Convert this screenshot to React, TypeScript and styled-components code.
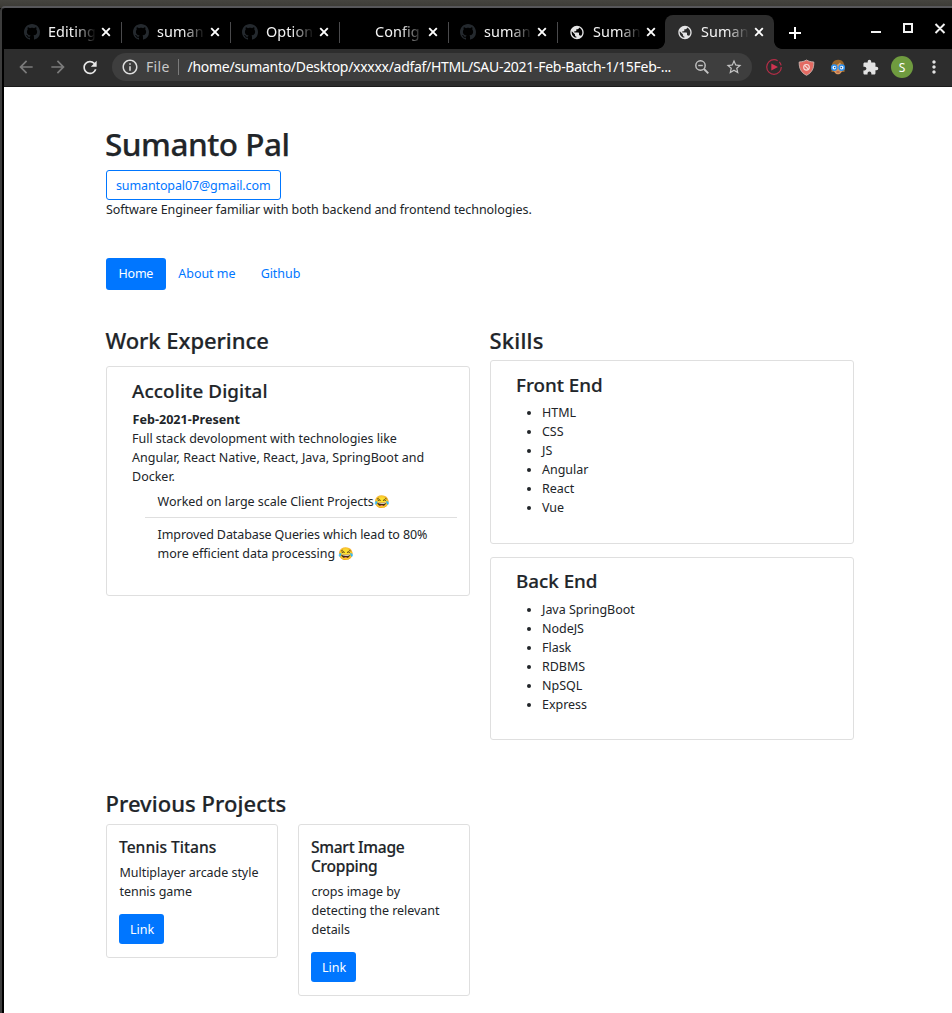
import React from "react";
import styled, { createGlobalStyle } from "styled-components";
import {
  MdArrowBack,
  MdArrowForward,
  MdExtension,
  MdInfoOutline,
  MdMoreVert,
  MdPublic,
  MdRefresh,
  MdStarBorder,
} from "react-icons/md";

const GlobalStyle = createGlobalStyle`
  *, *::before, *::after { box-sizing: border-box; }
  body {
    margin: 0;
    background: #000;
    color: #212529;
    font-family: "Noto Sans", sans-serif;
    font-size: 12.5px;
    line-height: 19px;
  }
  h1, h2, h3, h4, p, ul { margin: 0; padding: 0; font-weight: 400; }
`;

/* ---------- window frame ---------- */

const Desktop = styled.div`
  width: 952px;
  height: 1013px;
  padding-top: 6px;
  overflow: hidden;
  background: linear-gradient(#45443f, #3b3a35) 0 0 / 100% 8px no-repeat, #000;
`;

const Window = styled.div`
  display: flex;
  flex-direction: column;
  height: 1007px;
  padding-left: 2px;
  border-top: 2px solid #57575a;
  border-left: 2px solid #3c3c3c;
  border-top-left-radius: 5px;
  background: #000;
`;

/* ---------- tab strip ---------- */

const TabStrip = styled.div`
  display: flex;
  align-items: flex-end;
  flex: none;
  height: 41px;
  padding-left: 9px;
  color: #fff;
`;

const Tab = styled.div<{ $active?: boolean; $divider?: boolean; $width?: number }>`
  position: relative;
  display: flex;
  align-items: center;
  width: ${(p) => p.$width ?? 109}px;
  height: 34px;
  padding-left: ${(p) => (p.$active ? 12 : 11)}px;
  border-radius: 8px 8px 0 0;
  background: ${(p) => (p.$active ? "#2d2d2d" : "transparent")};

  &::after {
    content: "";
    display: ${(p) => (p.$divider ? "block" : "none")};
    position: absolute;
    right: 0;
    top: 7px;
    width: 1px;
    height: 21px;
    background: #4a4a4c;
  }
`;

const TabFlare = styled.i<{ $side: "left" | "right" }>`
  position: absolute;
  bottom: 0;
  ${(p) => p.$side}: -8px;
  width: 8px;
  height: 8px;
  background: radial-gradient(
    circle at ${(p) => (p.$side === "left" ? "0 0" : "100% 0")},
    transparent 7.5px,
    #2d2d2d 8.2px
  );
`;

const Favicon = styled.span`
  display: flex;
  align-items: center;
  justify-content: center;
  flex: none;
  width: 16px;
  height: 16px;
  margin-right: 8px;
  color: #e4e4e5;
`;

const TabTitle = styled.span`
  flex: none;
  width: 48px;
  margin-right: 5px;
  overflow: hidden;
  white-space: nowrap;
  font-size: 14.4px;
  line-height: 20px;
  letter-spacing: 0.1px;
  color: #f4f4f4;
  mask-image: linear-gradient(90deg, #000 26px, transparent 48px);
`;

const TabClose = styled.span`
  display: flex;
  color: #fff;
`;

const NewTab = styled.span`
  display: flex;
  margin: 0 0 10px 15px;
`;

const WindowButtons = styled.div`
  display: flex;
  align-items: center;
  align-self: flex-start;
  height: 40px;
  margin-left: auto;
  padding-right: 5px;
`;

/* ---------- toolbar ---------- */

const Toolbar = styled.div`
  display: flex;
  align-items: center;
  flex: none;
  height: 38px;
  padding: 0 7px 1px 12px;
  background: #2d2d2d;
  border-bottom: 1px solid #1b1b1b;
`;

const NavButton = styled.span<{ $dim?: boolean }>`
  display: flex;
  align-items: center;
  justify-content: center;
  flex: none;
  width: 20px;
  height: 20px;
  margin-right: 12px;
  color: ${(p) => (p.$dim ? "#7b7b7b" : "#e8e8e8")};
`;

const AddressBar = styled.div`
  display: flex;
  align-items: center;
  flex: none;
  width: 640px;
  height: 28px;
  padding: 0 9px;
  border-radius: 14px;
  background: #3e3e3e;
  color: #fff;
  font-size: 14px;
  line-height: 20px;
  white-space: nowrap;
`;

const Scheme = styled.span`
  margin-left: 7px;
  padding-right: 8px;
  color: #c9c9c9;
  letter-spacing: 0.3px;
`;

const SchemeDivider = styled.span`
  width: 1px;
  height: 16px;
  margin-right: 9px;
  background: #7b7b7b;
`;

const Address = styled.span`
  flex: 1;
  letter-spacing: -0.29px;
`;

const AddressAction = styled.span`
  display: flex;
  margin-left: 14px;
  color: #c4c4c4;
`;

const Extensions = styled.div`
  display: flex;
  align-items: center;
  justify-content: space-between;
  width: 182px;
  margin-left: 11px;
`;

const ExtensionSlot = styled.span`
  display: flex;
  align-items: center;
  justify-content: center;
  width: 22px;
  height: 22px;
  color: #e2e2e2;
`;

const Avatar = styled(ExtensionSlot)`
  border-radius: 50%;
  background: #6f9b3f;
  color: #fff;
  font-size: 12px;
`;

/* ---------- page ---------- */

const Page = styled.main`
  flex: 1;
  padding: 38px 98px 0 102px;
  overflow: hidden;
  background: #fff;
`;

const Name = styled.h1`
  height: 38px;
  margin-left: -1px;
  font-size: 31.5px;
  font-weight: 500;
  line-height: 38px;
  letter-spacing: -0.5px;
  -webkit-text-stroke: 0.25px;
`;

const EmailButton = styled.a`
  display: block;
  width: 175px;
  height: 30px;
  margin-top: 7px;
  padding-left: 9px;
  border: 1px solid #0076ff;
  border-radius: 3px;
  color: #0076ff;
  line-height: 29px;
  letter-spacing: -0.12px;
`;

const Tagline = styled.p`
  letter-spacing: -0.07px;
`;

const Nav = styled.nav`
  display: flex;
  margin-top: 39px;
`;

const NavPill = styled.a<{ $active?: boolean }>`
  height: 32px;
  padding: 0 12.6px;
  border-radius: 3px;
  background: ${(p) => (p.$active ? "#0076ff" : "transparent")};
  color: ${(p) => (p.$active ? "#fff" : "#0076ff")};
  line-height: 31px;
  letter-spacing: ${(p) => (p.$active ? -0.25 : -0.05)}px;
`;

const Columns = styled.div`
  display: grid;
  grid-template-columns: 364px 364px;
  gap: 20px;
  align-items: start;
  margin-top: 37px;
`;

const SectionTitle = styled.h2<{ $gap: number; $spacing?: number }>`
  height: 27px;
  margin-left: -0.5px;
  margin-bottom: ${(p) => p.$gap}px;
  font-size: 22px;
  font-weight: 500;
  line-height: 27px;
  letter-spacing: ${(p) => p.$spacing ?? 0}px;
  -webkit-text-stroke: 0.2px;
`;

const Card = styled.section<{ $height: number; $offset?: number }>`
  height: ${(p) => p.$height}px;
  padding: ${(p) => 13 - (p.$offset ?? 0)}px 12px 0 25px;
  border: 1px solid #dfdfdf;
  border-radius: 3px;

  & + & {
    margin-top: 13px;
  }
`;

const CardTitle = styled.h3<{ $gap?: number; $spacing?: number }>`
  margin-bottom: ${(p) => p.$gap ?? 7}px;
  font-size: 18.8px;
  font-weight: 500;
  line-height: 23px;
  letter-spacing: ${(p) => p.$spacing ?? 0}px;
  -webkit-text-stroke: 0.2px;
`;

const Period = styled.p`
  padding-left: 0.5px;
  font-size: 12.6px;
  font-weight: 700;
`;

const Line = styled.span<{ $spacing?: number }>`
  display: block;
  white-space: nowrap;
  letter-spacing: ${(p) => p.$spacing ?? 0}px;
`;

const Highlights = styled.div`
  margin-left: 13px;
`;

const Highlight = styled.div`
  padding: 6px 12px 6px 12.6px;

  & + & {
    padding-top: 7px;
    border-top: 1px solid #dfdfdf;
  }
`;

const SkillList = styled.ul`
  padding-left: 26px;
  letter-spacing: -0.03px;
`;

const Projects = styled.div`
  display: flex;
  align-items: flex-start;
  gap: 20px;
`;

const ProjectCard = styled.article`
  width: 172px;
  padding: 13px 12px;
  border: 1px solid #dfdfdf;
  border-radius: 3px;
`;

const ProjectTitle = styled.h4`
  margin-bottom: 6px;
  font-size: 15.6px;
  font-weight: 500;
  line-height: 19px;
  -webkit-text-stroke: 0.15px;
`;

const ProjectText = styled.p`
  padding-left: 0.5px;
`;

const LinkButton = styled.a`
  display: block;
  width: 45px;
  height: 30px;
  margin-top: 13px;
  padding-left: 1px;
  border-radius: 3px;
  background: #0076ff;
  color: #fff;
  line-height: 31px;
  text-align: center;
`;

const PreviousProjects = styled.section`
  margin-top: 50px;
`;

/* ---------- drawings ---------- */

const GithubMark = () => (
  <svg width="16" height="16" viewBox="0 0 16 16" fill="#24292e">
    <path d="M8 0C3.58 0 0 3.58 0 8c0 3.54 2.29 6.53 5.47 7.59.4.07.55-.17.55-.38 0-.19-.01-.82-.01-1.49-2.01.37-2.53-.49-2.69-.94-.09-.23-.48-.94-.82-1.13-.28-.15-.68-.52-.01-.53.63-.01 1.08.58 1.23.82.72 1.21 1.87.87 2.33.66.07-.52.28-.87.51-1.07-1.78-.2-3.64-.89-3.64-3.95 0-.87.31-1.59.82-2.15-.08-.2-.36-1.02.08-2.12 0 0 .67-.21 2.2.82.64-.18 1.32-.27 2-.27s1.36.09 2 .27c1.53-1.04 2.2-.82 2.2-.82.44 1.1.16 1.92.08 2.12.51.56.82 1.27.82 2.15 0 3.07-1.87 3.75-3.65 3.95.29.25.54.73.54 1.48 0 1.07-.01 1.93-.01 2.2 0 .21.15.46.55.38A8.01 8.01 0 0 0 16 8c0-4.42-3.58-8-8-8z" />
  </svg>
);

const Cross = () => (
  <svg width="10" height="10" viewBox="0 0 10 10" fill="none" stroke="currentColor" strokeWidth="1.9">
    <path d="M1.200 1.200l7.600 7.600M8.800 1.200l-7.600 7.600" />
  </svg>
);

const Plus = () => (
  <svg width="12" height="12" viewBox="0 0 12 12" fill="none" stroke="currentColor" strokeWidth="2">
    <path d="M6 0v12M0 6h12" />
  </svg>
);

const ZoomOut = () => (
  <svg width="18" height="18" viewBox="0 0 18 18" fill="none" stroke="currentColor" strokeWidth="1.400">
    <circle cx="7.500" cy="7.500" r="4.700" />
    <path d="M5.200 7.500h4.600" />
    <path d="M11 11l4.300 4.300" strokeWidth="1.900" />
  </svg>
);

const PlayRing = () => (
  <svg width="16" height="16" viewBox="0 0 16 16">
    <circle cx="8" cy="8" r="7.300" fill="none" stroke="#b52d47" strokeWidth="1.200" strokeDasharray="38 2 4 2" />
    <path d="M5.300 4.400L12 8l-6.700 3.600z" fill="#cf3350" />
  </svg>
);

const Shield = () => (
  <svg width="17" height="17" viewBox="0 0 17 17">
    <path d="M8.500 1c2 1.300 4.500 1.900 7.300 2 .2 6-1.600 10.500-7.300 13.300C2.800 13.500 1 9 1.200 3c2.800-.1 5.300-.7 7.300-2z" fill="#e46a62" stroke="#c9b5b0" strokeWidth=".9" />
    <circle cx="8.500" cy="8.300" r="2.800" fill="none" stroke="#f6dedb" strokeWidth="1.100" />
    <path d="M6.600 6.400l3.800 3.800" stroke="#f6dedb" strokeWidth="1.100" />
  </svg>
);

const GlassesFace = () => (
  <svg width="16" height="16" viewBox="0 0 16 16">
    <path d="M1.500 13C.8 5 3 .8 8.200 .8S15.200 5 14.500 13z" fill="#9a6528" />
    <path d="M3 7C6 6.500 9 5 10 3.500c1 1.500 2 2.500 3 3.500 0 5-2 8.300-5 8.300S3.200 12 3 7z" fill="#d99a62" />
    <circle cx="4.300" cy="8.600" r="2.600" fill="#eef7ff" stroke="#2a8ff0" strokeWidth="1.500" />
    <circle cx="11.700" cy="8.600" r="2.600" fill="#eef7ff" stroke="#2a8ff0" strokeWidth="1.500" />
    <circle cx="4.700" cy="8.600" r=".8" fill="#1f4f86" />
    <circle cx="11.300" cy="8.600" r=".8" fill="#1f4f86" />
    <path d="M6.500 13h3" stroke="#a5443a" strokeWidth="1" />
  </svg>
);

const WindowControls = () => (
  <svg width="76" height="16" viewBox="0 0 76 16" fill="none" stroke="#f2f2f2" strokeWidth="2">
    <path d="M0 12h10M33 4h8v8h-8zM64.500 4l9 9M73.500 4l-9 9" />
  </svg>
);

/* ---------- data ---------- */

type TabInfo = { title: string; icon: "github" | "globe" | "none"; active?: boolean; divider?: boolean; width?: number };

const tabs: TabInfo[] = [
  { title: "Editing", icon: "github", divider: true },
  { title: "suman", icon: "github", divider: true },
  { title: "Option", icon: "github", divider: true },
  { title: "Config", icon: "none", divider: true },
  { title: "suman", icon: "github", divider: true },
  { title: "Suman", icon: "globe", width: 107 },
  { title: "Suman", icon: "globe", active: true },
];

const skills = [
  { title: "Front End", height: 184, gap: 6, offset: 0, items: ["HTML", "CSS", "JS", "Angular", "React", "Vue"] },
  { title: "Back End", height: 183, gap: 7, offset: 1, items: ["Java SpringBoot", "NodeJS", "Flask", "RDBMS", "NpSQL", "Express"] },
];

const projects = [
  { title: ["Tennis Titans"], spacing: 0, text: ["Multiplayer arcade style", "tennis game"] },
  { title: ["Smart Image", "Cropping"], spacing: -0.3, text: ["crops image by", "detecting the relevant", "details"] },
];

export default function App() {
  return (
    <Desktop>
      <GlobalStyle />
      <Window>
        <TabStrip>
          {tabs.map((tab, i) => (
            <Tab key={i} $active={tab.active} $divider={tab.divider} $width={tab.width}>
              {tab.active && <TabFlare $side="left" />}
              <Favicon>
                {tab.icon === "github" && <GithubMark />}
                {tab.icon === "globe" && <MdPublic size={17} />}
              </Favicon>
              <TabTitle>{tab.title}</TabTitle>
              <TabClose>
                <Cross />
              </TabClose>
              {tab.active && <TabFlare $side="right" />}
            </Tab>
          ))}
          <NewTab>
            <Plus />
          </NewTab>
          <WindowButtons>
            <WindowControls />
          </WindowButtons>
        </TabStrip>

        <Toolbar>
          <NavButton $dim><MdArrowBack size={20} /></NavButton>
          <NavButton $dim><MdArrowForward size={20} /></NavButton>
          <NavButton><MdRefresh size={21} /></NavButton>
          <AddressBar>
            <MdInfoOutline size={18} color="#dedede" />
            <Scheme>File</Scheme>
            <SchemeDivider />
            <Address>/home/sumanto/Desktop/xxxxx/adfaf/HTML/SAU-2021-Feb-Batch-1/15Feb-...</Address>
            <AddressAction><ZoomOut /></AddressAction>
            <AddressAction><MdStarBorder size={18} /></AddressAction>
          </AddressBar>
          <Extensions>
            <ExtensionSlot><PlayRing /></ExtensionSlot>
            <ExtensionSlot><Shield /></ExtensionSlot>
            <ExtensionSlot><GlassesFace /></ExtensionSlot>
            <ExtensionSlot><MdExtension size={17} /></ExtensionSlot>
            <Avatar>S</Avatar>
            <ExtensionSlot><MdMoreVert size={20} /></ExtensionSlot>
          </Extensions>
        </Toolbar>

        <Page>
          <Name>Sumanto Pal</Name>
          <EmailButton>sumantopal07@gmail.com</EmailButton>
          <Tagline>Software Engineer familiar with both backend and frontend technologies.</Tagline>

          <Nav>
            <NavPill $active>Home</NavPill>
            <NavPill>About me</NavPill>
            <NavPill>Github</NavPill>
          </Nav>

          <Columns>
            <div>
              <SectionTitle $gap={12} $spacing={-0.05}>Work Experince</SectionTitle>
              <Card $height={230}>
                <CardTitle $spacing={0.12}>Accolite Digital</CardTitle>
                <Period>Feb-2021-Present</Period>
                <p>
                  <Line $spacing={-0.02}>Full stack devolopment with technologies like</Line>
                  <Line>Angular, React Native, React, Java, SpringBoot and</Line>
                  <Line>Docker.</Line>
                </p>
                <Highlights>
                  <Highlight>
                    <Line $spacing={-0.02}>Worked on large scale Client Projects😂</Line>
                  </Highlight>
                  <Highlight>
                    <Line $spacing={-0.1}>Improved Database Queries which lead to 80%</Line>
                    <Line $spacing={-0.03}>more efficient data processing 😂</Line>
                  </Highlight>
                </Highlights>
              </Card>
            </div>
            <div>
              <SectionTitle $gap={6} $spacing={0.2}>Skills</SectionTitle>
              {skills.map((group) => (
                <Card key={group.title} $height={group.height} $offset={group.offset}>
                  <CardTitle $gap={group.gap}>{group.title}</CardTitle>
                  <SkillList>
                    {group.items.map((item) => <li key={item}>{item}</li>)}
                  </SkillList>
                </Card>
              ))}
            </div>
          </Columns>

          <PreviousProjects>
            <SectionTitle $gap={7} $spacing={0.05}>Previous Projects</SectionTitle>
            <Projects>
              {projects.map((project) => (
                <ProjectCard key={project.title[0]}>
                  <ProjectTitle>
                    {project.title.map((line) => <Line key={line} $spacing={project.spacing}>{line}</Line>)}
                  </ProjectTitle>
                  <ProjectText>
                    {project.text.map((line) => <Line key={line} $spacing={-0.04}>{line}</Line>)}
                  </ProjectText>
                  <LinkButton>Link</LinkButton>
                </ProjectCard>
              ))}
            </Projects>
          </PreviousProjects>
        </Page>
      </Window>
    </Desktop>
  );
}
